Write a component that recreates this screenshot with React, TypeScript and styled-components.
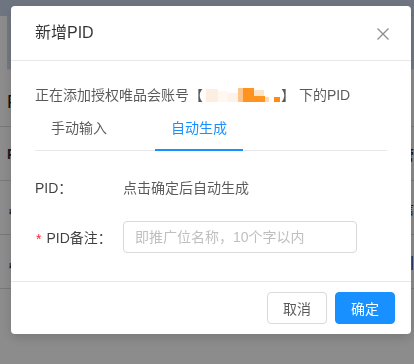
import React from "react";
import styled, { createGlobalStyle } from "styled-components";

const GlobalStyle = createGlobalStyle`
	html, body {
		margin: 0;
		padding: 0;
		width: 414px;
		height: 364px;
		overflow: hidden;
		background: #fff;
		font-family: "Liberation Sans", "Noto Sans CJK SC", sans-serif;
	}
	* {
		box-sizing: border-box;
	}
`;

export default function App() {
	return (
		<>
			<GlobalStyle />
			<BackPage />
			<Overlay />
			<ModalWrap>
				<Modal>
					<ModalHeader>
						<Title>新增PID</Title>
						<CloseButton aria-label='close'>
							<svg width='12' height='12' viewBox='0 0 12 12'>
								<path d='M0.5 0.5 L11.5 11.5 M11.5 0.5 L0.5 11.5' stroke='currentColor' strokeWidth='1.3' fill='none' />
							</svg>
						</CloseButton>
					</ModalHeader>
					<ModalBody>
						<Notice>
							正在添加授权唯品会账号【
							<Mosaic />】 下的PID
						</Notice>
						<TabNav>
							<Tab>手动输入</Tab>
							<Tab active>自动生成</Tab>
						</TabNav>
						<FormRow gap={10}>
							<Label>PID：</Label>
							<Value>点击确定后自动生成</Value>
						</FormRow>
						<FormRow gap={24}>
							<Label>
								<Required>*</Required>PID备注：
							</Label>
							<Input placeholder='即推广位名称，10个字以内' />
						</FormRow>
					</ModalBody>
					<ModalFooter>
						<Button>取消</Button>
						<Button primary>确定</Button>
					</ModalFooter>
				</Modal>
			</ModalWrap>
		</>
	);
}

// blurred account name in the screenshot
const Mosaic = () => (
	<MosaicSvg width='78' height='16' viewBox='0 0 78 16'>
		<rect x='3' y='2' width='12' height='13' fill='#fdeee2' />
		<rect x='15' y='4' width='10' height='11' fill='#fff7f0' />
		<rect x='25' y='6' width='10' height='9' fill='#fdf3ea' />
		<rect x='35' y='1' width='5' height='14' fill='#ffc48a' />
		<rect x='40' y='1' width='11' height='14' fill='#ff9320' />
		<rect x='51' y='3' width='10' height='6' fill='#ffe3c6' />
		<rect x='51' y='9' width='11' height='6' fill='#ff951f' />
		<rect x='62' y='10' width='4' height='5' fill='#ffd9b4' />
		<rect x='71' y='10' width='6' height='5' fill='#ff8c12' />
	</MosaicSvg>
);

const BackPage = () => (
	<Page>
		<TopBar />
		<PanelBox />
		<PageTitle>P</PageTitle>
		<Table>
			<TableRow head>
				<span>P</span>
				<span>管</span>
			</TableRow>
			<TableRow>
				<span>↙</span>
				<span>信</span>
			</TableRow>
			<TableRow>
				<span>↙</span>
				<span>|</span>
			</TableRow>
			<TableRow />
		</Table>
	</Page>
);

const Page = styled.div`
	width: 414px;
	height: 364px;
	display: flex;
	flex-direction: column;
`;

const TopBar = styled.div`
	height: 16px;
	background: #c9d5ea;
`;

const PanelBox = styled.div`
	height: 54px;
	margin-left: 7px;
	background: #d3dbea;
	border-bottom: 1px solid #f2f2f2;
`;

const PageTitle = styled.div`
	padding: 22px 0 0 7px;
	height: 56px;
	font-size: 18px;
	color: #222;
`;

const Table = styled.div`
	display: flex;
	flex-direction: column;
`;

const TableRow = styled.div<{ head?: boolean }>`
	height: 54px;
	border-top: 1px solid #dcdcdc;
	display: flex;
	justify-content: space-between;
	align-items: center;
	padding: 0 0 0 7px;
	font-size: 14px;
	font-weight: ${(p) => (p.head ? 600 : 400)};
	color: #333;
`;

const Overlay = styled.div`
	position: fixed;
	inset: 0;
	background: rgba(0, 0, 0, 0.45);
`;

const ModalWrap = styled.div`
	position: fixed;
	inset: 0;
	padding: 6px 0 0 11px;
`;

const Modal = styled.div`
	width: 400px;
	background: #fff;
	border-radius: 4px;
	box-shadow: 0 4px 12px rgba(0, 0, 0, 0.15);
	display: flex;
	flex-direction: column;
`;

const ModalHeader = styled.div`
	height: 55px;
	padding: 0 24px;
	border-bottom: 1px solid #e8e8e8;
	display: flex;
	align-items: center;
	justify-content: space-between;
`;

const Title = styled.div`
	font-size: 16px;
	line-height: 22px;
	color: rgba(0, 0, 0, 0.8);
`;

const CloseButton = styled.button`
	border: none;
	background: none;
	padding: 0;
	margin-right: -2px;
	margin-top: 1px;
	display: flex;
	color: rgba(0, 0, 0, 0.45);
	cursor: pointer;
`;

const ModalBody = styled.div`
	padding: 24px 24px 0;
	display: flex;
	flex-direction: column;
	font-size: 14px;
	color: rgba(0, 0, 0, 0.65);
`;

const Notice = styled.div`
	line-height: 20px;
	display: flex;
	align-items: center;
	white-space: pre;
`;

const MosaicSvg = styled.svg`
	display: block;
`;

const TabNav = styled.div`
	display: flex;
	gap: 32px;
	border-bottom: 1px solid #e8e8e8;
	margin-bottom: 16px;
`;

const Tab = styled.div<{ active?: boolean }>`
	padding: 12px 16px 10px;
	line-height: 22px;
	margin-bottom: -1px;
	border-bottom: 2px solid ${(p) => (p.active ? "#1890ff" : "transparent")};
	color: ${(p) => (p.active ? "#1890ff" : "rgba(0, 0, 0, 0.65)")};
`;

const FormRow = styled.div<{ gap: number }>`
	height: 40px;
	display: flex;
	align-items: center;
	margin-bottom: ${(p) => p.gap}px;
`;

const Label = styled.div`
	width: 88px;
	flex-shrink: 0;
	display: flex;
	align-items: center;
	color: rgba(0, 0, 0, 0.75);
`;

const Required = styled.span`
	color: #f5222d;
	margin-right: 5px;
	font-family: "Liberation Sans", sans-serif;
	font-size: 14px;
	line-height: 1;
	padding-left: 1px;
	position: relative;
	top: 2px;
`;

const Value = styled.div`
	color: rgba(0, 0, 0, 0.65);
`;

const Input = styled.input`
	width: 234px;
	height: 32px;
	padding: 4px 11px;
	border: 1px solid #d9d9d9;
	border-radius: 4px;
	font-size: 14px;
	font-family: inherit;
	color: rgba(0, 0, 0, 0.65);
	outline: none;
	&::placeholder {
		color: #bfbfbf;
	}
`;

const ModalFooter = styled.div`
	border-top: 1px solid #e8e8e8;
	padding: 10px 16px;
	display: flex;
	justify-content: flex-end;
	gap: 8px;
`;

const Button = styled.button<{ primary?: boolean }>`
	height: 32px;
	padding: 0 15px;
	font-size: 14px;
	font-family: inherit;
	border-radius: 4px;
	border: 1px solid ${(p) => (p.primary ? "#1890ff" : "#d9d9d9")};
	background: ${(p) => (p.primary ? "#1890ff" : "#fff")};
	color: ${(p) => (p.primary ? "#fff" : "rgba(0, 0, 0, 0.65)")};
	cursor: pointer;
`;
